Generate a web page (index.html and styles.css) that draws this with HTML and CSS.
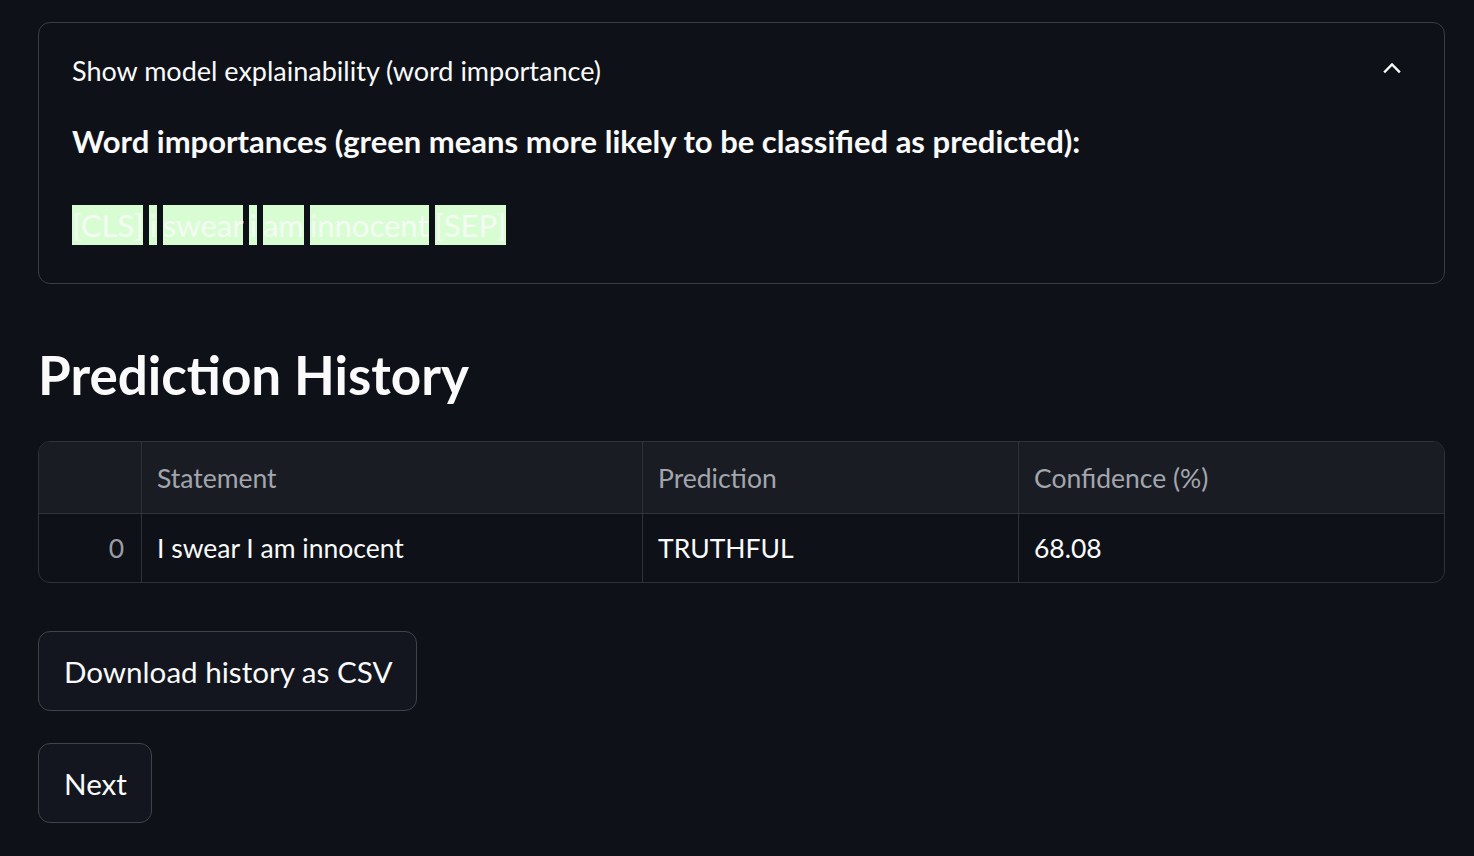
FILE: index.html
```html
<!DOCTYPE html>
<html>
<head>
<meta charset="utf-8">
<link rel="stylesheet" href="styles.css">
</head>
<body>
<main class="main">
  <details class="expander" open>
    <summary class="exp-head">
      <span class="exp-label">Show model explainability (word importance)</span>
      <svg class="chev" width="24" height="24" viewBox="0 0 24 24"><path d="M5 15.5 L12 8.5 L19 15.5" fill="none" stroke="#fafafa" stroke-width="2.4" stroke-linecap="square"/></svg>
    </summary>
    <div class="exp-body">
      <p class="imp-title">Word importances (green means more likely to be classified as predicted):</p>
      <div class="tokens">
        <span class="tok">[CLS]</span>
        <span class="tok">i</span>
        <span class="tok">swear</span>
        <span class="tok">i</span>
        <span class="tok">am</span>
        <span class="tok">innocent</span>
        <span class="tok">[SEP]</span>
      </div>
    </div>
  </details>

  <h2 class="heading">Prediction History</h2>

  <div class="table">
    <div class="row head">
      <div class="cell idx"></div>
      <div class="cell c1">Statement</div>
      <div class="cell c2">Prediction</div>
      <div class="cell c3">Confidence (%)</div>
    </div>
    <div class="row body">
      <div class="cell idx">0</div>
      <div class="cell c1">I swear I am innocent</div>
      <div class="cell c2">TRUTHFUL</div>
      <div class="cell c3">68.08</div>
    </div>
  </div>

  <div class="buttons">
    <button class="btn">Download history as CSV</button>
    <button class="btn">Next</button>
  </div>
</main>
</body>
</html>
```

FILE: styles.css
```css
* { box-sizing: border-box; }
html, body {
  margin: 0;
  padding: 0;
  background: #0e1117;
  color: #fafafa;
  font-family: Lato, "Source Sans Pro", "Liberation Sans", sans-serif;
}
.main {
  padding: 22px 29px 0 38px;
}
.expander {
  border: 1.5px solid #3b3d45;
  border-radius: 12px;
  padding: 0 33px 38px 33px;
}
.exp-head {
  list-style: none;
  display: flex;
  align-items: center;
  justify-content: space-between;
  height: 94px;
  cursor: pointer;
}
.exp-head::-webkit-details-marker { display: none; }
.exp-label {
  font-size: 27px;
}
.chev { margin-right: 7px; margin-top: -4px; }
.imp-title {
  margin: 9px 0 0 0;
  font-size: 31px;
  font-weight: 700;
  line-height: 1;
}
.tokens {
  display: flex;
  gap: 6px;
  margin-top: 48px;
}
.tok {
  background: #d9fdd3;
  color: #f4fbf3;
  font-size: 31px;
  line-height: 40px;
  height: 40px;
}
.heading {
  margin: 64px 0 0 0;
  font-size: 53px;
  font-weight: 700;
  line-height: 1;
}
.table {
  margin-top: 40px;
  border: 1.5px solid #30323a;
  border-radius: 12px;
  overflow: hidden;
}
.row {
  display: grid;
  grid-template-columns: 102px 501px 376px 1fr;
}
.row.head { background: #1a1c24; height: 72px; border-bottom: 1.5px solid #30323a; }
.row.body { height: 68px; }
.cell {
  display: flex;
  align-items: center;
  padding-left: 15px;
  font-size: 26.5px;
  border-left: 1.5px solid #30323a;
}
.cell.idx { border-left: none; justify-content: flex-end; padding-right: 17px; color: #9a9ca3; }
.head .cell { color: #a3a6ad; }
.buttons {
  margin-top: 48px;
  display: flex;
  flex-direction: column;
  align-items: flex-start;
  gap: 32px;
}
.btn {
  background: #13161e;
  color: #fafafa;
  border: 1.5px solid #41434b;
  border-radius: 12px;
  font-family: inherit;
  font-size: 29.6px;
  height: 80px;
  padding: 0 24px 0 25px;
}
```
